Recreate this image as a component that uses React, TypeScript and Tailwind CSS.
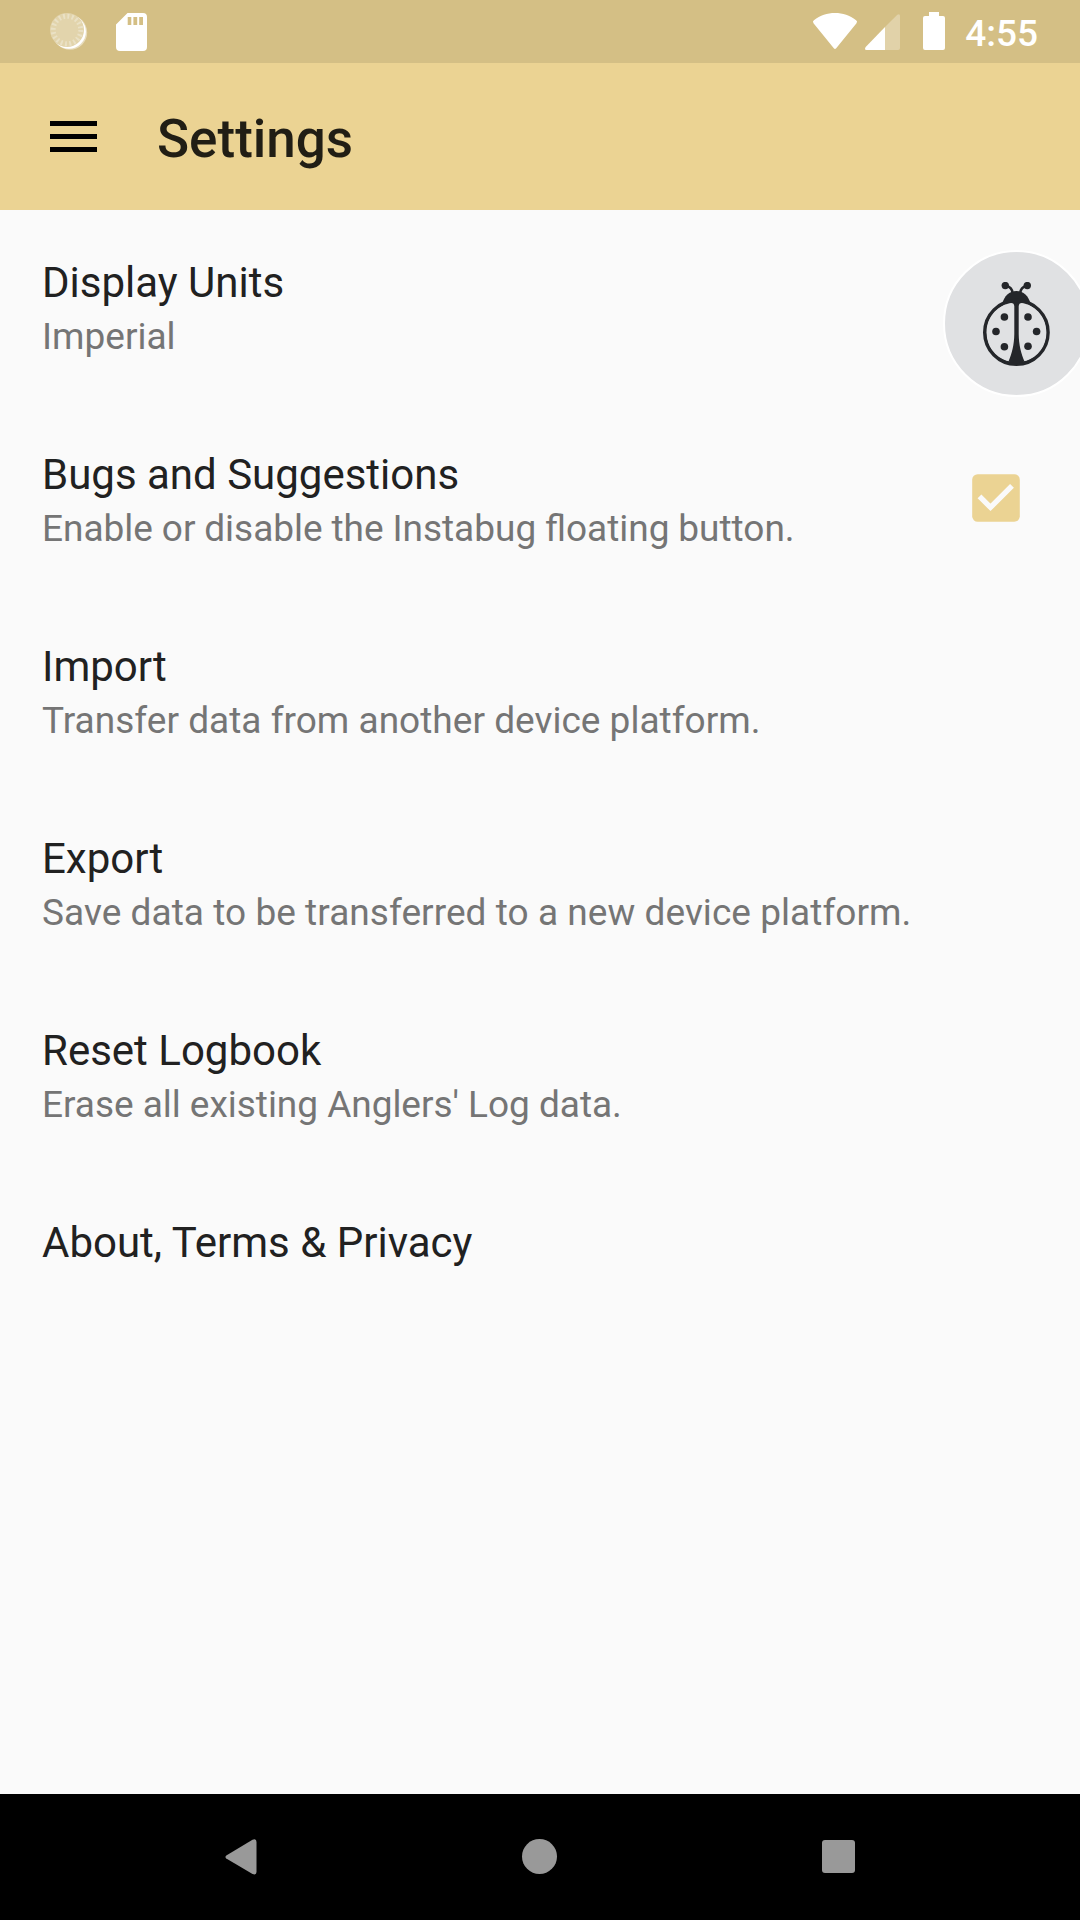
type Setting = { title: string; summary?: string; checked?: boolean; spacing?: string };

const settings: Setting[] = [
  { title: "Display Units", summary: "Imperial" },
  {
    title: "Bugs and Suggestions",
    summary: "Enable or disable the Instabug floating button.",
    checked: true,
    spacing: "[word-spacing:-0.38px]",
  },
  {
    title: "Import",
    summary: "Transfer data from another device platform.",
    spacing: "tracking-[0.02px]",
  },
  {
    title: "Export",
    summary: "Save data to be transferred to a new device platform.",
    spacing: "tracking-[0.05px]",
  },
  {
    title: "Reset Logbook",
    summary: "Erase all existing Anglers' Log data.",
    spacing: "tracking-[-0.03px]",
  },
  { title: "About, Terms & Privacy" },
];

function SyncIcon() {
  return (
    <svg className="h-[38px] w-[38px]" viewBox="0 0 38 38">
      <circle cx="20" cy="19.5" r="17.2" fill="#fff" fillOpacity="0.45" />
      <circle cx="18.9" cy="18.7" r="17" fill="#fff" />
      <circle cx="17" cy="17" r="17" fill="#e2d4ac" />
      <circle
        cx="17"
        cy="17"
        r="13.8"
        fill="none"
        stroke="#eae1c5"
        strokeWidth="5"
        strokeDasharray="1.9 2.435"
      />
    </svg>
  );
}

function SdCardIcon() {
  return (
    <svg className="h-[38px] w-[31px]" viewBox="0 0 31 38">
      <path
        fill="#fff"
        fillRule="evenodd"
        d="M11.5 0H27a4 4 0 0 1 4 4v30a4 4 0 0 1-4 4H4a4 4 0 0 1-4-4V11.5ZM11.7 4v8h3.6V4ZM17.4 4v8h3.8V4ZM23.2 4v8h3.8V4Z"
      />
    </svg>
  );
}

function WifiIcon() {
  return (
    <svg className="h-[37px] w-[46px]" viewBox="0 0 46 37">
      <path
        fill="#fff"
        d="M1.5 10.2Q.2 8.5 1.9 7.3C8.2 2.4 15.2 0 23 0s14.8 2.4 21.1 7.3q1.7 1.2.4 2.9L24.2 35.2q-1.2 1.4-2.4 0Z"
      />
    </svg>
  );
}

function SignalIcon() {
  return (
    <svg className="h-[36px] w-[35px]" viewBox="0 0 35 36">
      <path fill="#fff" fillOpacity="0.3" d="M20 13 32.3.8Q35-.8 35 2v32q0 2-2 2H20Z" />
      <path fill="#fff" d="M20 13v23H1.5Q-1 36 .7 33Z" />
    </svg>
  );
}

function BatteryIcon() {
  return (
    <svg className="h-[38px] w-[22px]" viewBox="0 0 22 38">
      <path fill="#fff" d="M6 0h10v4h4q2 0 2 2v30q0 2-2 2H2q-2 0-2-2V6q0-2 2-2h4Z" />
    </svg>
  );
}

function LadybugIcon() {
  return (
    <svg className="h-[84px] w-[67px]" viewBox="0 0 67 84" fill="#24262a">
      <circle cx="22.3" cy="3.6" r="3.7" />
      <circle cx="44.3" cy="3.6" r="3.7" />
      <path
        d="M23.5 4.2C27.4 4.8 29.2 7 29.6 11M43.3 4.2C39.4 4.8 37.6 7 37.2 11"
        fill="none"
        stroke="#24262a"
        strokeWidth="2.5"
      />
      <path d="M19.4 21.5C21.2 14 26.2 9 33.4 9S45.6 14 47.4 21.5L41 24H26Z" />
      <ellipse cx="33.4" cy="50.4" rx="31.5" ry="31.7" fill="none" stroke="#24262a" strokeWidth="3.8" />
      <path
        fill="#e0e1e3"
        d="M26.5 21.2Q31.2 20.2 31.3 24.5V52C31.2 63 28.8 71.5 26 78Q25.5 79.2 24 78.7C12 75 3.6 64 3.6 50.5 3.6 36 13 24.5 26.5 21.2ZM40.5 21.2Q35.8 20.2 35.7 24.5V52C35.8 63 38.2 71.5 41 78Q41.5 79.2 43 78.7C55 75 63.4 64 63.4 50.5 63.4 36 54 24.5 40.5 21.2Z"
      />
      <path d="M31.3 24h4.4V52C35.8 63 38.2 71.5 41.5 79.5q-8 3.5-16 0C28.8 71.5 31.2 63 31.3 52Z" />
      <circle cx="21.4" cy="35" r="3.8" />
      <circle cx="45" cy="35" r="3.8" />
      <circle cx="13" cy="49.5" r="3.8" />
      <circle cx="53.6" cy="49.5" r="3.8" />
      <circle cx="21.4" cy="64.7" r="3.8" />
      <circle cx="45" cy="64.2" r="3.8" />
    </svg>
  );
}

function Checkbox() {
  return (
    <svg className="h-[48px] w-[48px]" viewBox="0 0 48 48">
      <rect x="0.2" y="0.2" width="47.6" height="47.6" rx="5.5" fill="#ebd393" />
      <path d="m7.5 22.3 11 11L40 11.8" fill="none" stroke="#fafafa" strokeWidth="5.4" />
    </svg>
  );
}

function SettingRow({ title, summary, checked, spacing = "" }: Setting) {
  return (
    <li className="flex h-48 items-start justify-between pr-[60px] pl-[42px]">
      <div className="pt-12">
        <div className="text-[42px] leading-[49px] whitespace-nowrap text-[#212121]">{title}</div>
        {summary && (
          <div className={`mt-2 text-[37px] leading-[43px] whitespace-nowrap text-[#757575] ${spacing}`}>
            {summary}
          </div>
        )}
      </div>
      {checked && (
        <div className="pt-[72px]">
          <Checkbox />
        </div>
      )}
    </li>
  );
}

export default function App() {
  return (
    <div className="relative flex h-[1920px] w-[1080px] flex-col overflow-hidden bg-[#fafafa] font-[Roboto,sans-serif]">
      <div className="flex h-[63px] items-start justify-between bg-[#d4bf85] pr-[42px] pl-[50px]">
        <div className="flex gap-7 pt-[12.5px]">
          <SyncIcon />
          <SdCardIcon />
        </div>
        <div className="flex items-start">
          <div className="pt-[13px]">
            <WifiIcon />
          </div>
          <div className="ml-[7px] pt-[14px]">
            <SignalIcon />
          </div>
          <div className="ml-[23px] pt-3">
            <BatteryIcon />
          </div>
          <div className="ml-5 pt-[12px] text-[37px] leading-[43px] font-medium text-white">
            4:55
          </div>
        </div>
      </div>

      <header className="flex h-[147px] items-center bg-[#ebd393] pl-[50px]">
        <div className="flex w-[47px] flex-col gap-2">
          <div className="h-[5px] bg-black" />
          <div className="h-[5px] bg-black" />
          <div className="h-[5px] bg-black" />
        </div>
        <h1 className="ml-[60px] pt-[5px] text-[53px] leading-[62px] font-medium text-[#211e15]">
          Settings
        </h1>
      </header>

      <ul className="flex-1">
        {settings.map((s) => (
          <SettingRow key={s.title} {...s} />
        ))}
      </ul>

      <nav className="flex h-[126px] items-start justify-between bg-black pt-[45px] pr-[225px] pl-[225px]">
        <svg className="h-[36px] w-[32px]" viewBox="0 0 32 36">
          <path fill="#999" d="M1.3 16.4 27.5.8Q31.5-.8 31.5 3v30q0 3.5-4 2L1.3 19.6Q-.4 18 1.3 16.4Z" />
        </svg>
        <div className="h-[35px] w-[35px] rounded-full bg-[#999]" />
        <div className="mt-[1px] h-[33px] w-[33px] rounded-[3px] bg-[#999]" />
      </nav>

      <button className="absolute top-[250px] left-[943px] flex h-[147px] w-[147px] justify-center rounded-full border-2 border-white bg-[#e0e1e3] pt-[30px]">
        <LadybugIcon />
      </button>
    </div>
  );
}
